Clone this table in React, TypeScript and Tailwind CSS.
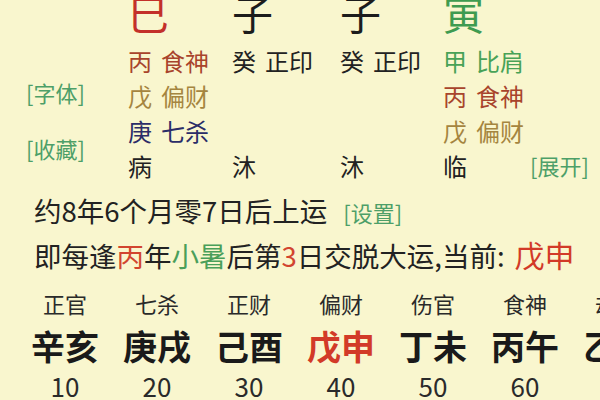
import React from "react";

type Hidden = { stem: string; god: string; color: string };

interface Pillar {
  branch: string;
  branchColor: string;
  width: string;
  hidden: Hidden[];
  stage: string;
}

const pillars: Pillar[] = [
  {
    branch: "巳",
    branchColor: "text-[#c3302a]",
    width: "w-[104px]",
    hidden: [
      { stem: "丙", god: "食神", color: "text-[#a8442c]" },
      { stem: "戊", god: "偏财", color: "text-[#a5853f]" },
      { stem: "庚", god: "七杀", color: "text-[#2b2d68]" },
    ],
    stage: "病",
  },
  {
    branch: "子",
    branchColor: "text-[#1c1c1c]",
    width: "w-[108px]",
    hidden: [{ stem: "癸", god: "正印", color: "text-[#222222]" }],
    stage: "沐",
  },
  {
    branch: "子",
    branchColor: "text-[#1c1c1c]",
    width: "w-[103px]",
    hidden: [{ stem: "癸", god: "正印", color: "text-[#222222]" }],
    stage: "沐",
  },
  {
    branch: "寅",
    branchColor: "text-[#3f9b50]",
    width: "w-[87px]",
    hidden: [
      { stem: "甲", god: "比肩", color: "text-[#48a257]" },
      { stem: "丙", god: "食神", color: "text-[#a8442c]" },
      { stem: "戊", god: "偏财", color: "text-[#a5853f]" },
    ],
    stage: "临",
  },
];

const luck = [
  { god: "正官", pair: "辛亥", age: "10" },
  { god: "七杀", pair: "庚戌", age: "20" },
  { god: "正财", pair: "己酉", age: "30" },
  { god: "偏财", pair: "戊申", age: "40", current: true },
  { god: "伤官", pair: "丁未", age: "50" },
  { god: "食神", pair: "丙午", age: "60" },
  { god: "劫财", pair: "乙巳", age: "70" },
];

function PillarColumn({ pillar }: { pillar: Pillar }) {
  return (
    <div className={`${pillar.width} shrink-0 flex flex-col`}>
      {/* 地支大字，顶部被截掉一点 */}
      <div className={`-mt-[8px] h-[40px] text-[41px] leading-[40px] ${pillar.branchColor}`}>
        {pillar.branch}
      </div>
      <div className="mt-[11px] h-[105px] flex flex-col">
        {pillar.hidden.map((h, i) => (
          <div key={i} className={`h-[35px] leading-[35px] text-[24px] flex ${h.color}`}>
            <span>{h.stem}</span>
            <span className="ml-[9px]">{h.god}</span>
          </div>
        ))}
      </div>
      <div className="h-[35px] leading-[35px] text-[24px] text-[#222222]">{pillar.stage}</div>
    </div>
  );
}

export default function App() {
  return (
    <div className="w-[600px] h-[400px] overflow-hidden bg-[#f9f6ce] font-['Noto_Sans_CJK_SC','Noto_Sans',sans-serif] text-[#222222]">
      {/* 四柱 */}
      <div className="flex">
        <div className="w-[128px] shrink-0 pl-[26px] pt-[77px] flex flex-col text-[22px] leading-[30px] text-[#4d9f68]">
          <span>[字体]</span>
          <span className="mt-[26px]">[收藏]</span>
        </div>
        {pillars.map((p, i) => (
          <PillarColumn key={i} pillar={p} />
        ))}
        <div className="flex-1 pt-[150px] text-[22px] leading-[30px] text-[#4d9f68]">[展开]</div>
      </div>

      {/* 起运信息 */}
      <div className="mt-[6px] pl-[34px] text-[27.5px] leading-[42px]">
        <div className="flex items-baseline whitespace-nowrap">
          <span>约8年6个月零7日后上运</span>
          <span className="ml-[16px] text-[22px] text-[#4d9f68]">[设置]</span>
        </div>
        <div className="flex items-baseline whitespace-nowrap">
          <span>
            即每逢<span className="text-[#d2452f]">丙</span>年
            <span className="text-[#4a9f5a]">小暑</span>后第
            <span className="text-[#d2452f]">3</span>日交脱大运,当前:
          </span>
          <span className="ml-[10px] text-[30px] text-[#d23a28]">戊申</span>
        </div>
      </div>

      {/* 大运 */}
      <div className="mt-[12px] pl-[19px] flex">
        {luck.map((l, i) => (
          <div key={i} className="w-[92px] shrink-0 flex flex-col items-center">
            <div className="text-[22px] leading-[30px] text-[#2a2a2a]">{l.god}</div>
            <div
              className={`text-[34px] leading-[56px] font-bold ${
                l.current ? "text-[#d23a28]" : "text-[#1a1a1a]"
              }`}
            >
              {l.pair}
            </div>
            <div className="text-[26px] leading-[24px] text-[#2a2a2a]">{l.age}</div>
          </div>
        ))}
      </div>
    </div>
  );
}
